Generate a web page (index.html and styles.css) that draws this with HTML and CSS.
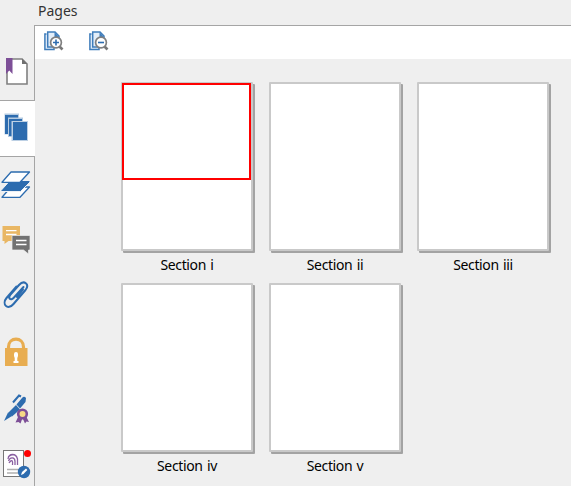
FILE: index.html
```html
<!DOCTYPE html>
<html lang="en">
<head>
<meta charset="utf-8">
<title>Pages</title>
<link rel="stylesheet" href="styles.css">
</head>
<body>
<div class="app">
  <nav class="sidebar">
    <div class="tab">
      <svg viewBox="0 44 34 56"><path d="M7 59H22L27 64V84H7Z" fill="#fff" stroke="#808080" stroke-width="1.6"/><path d="M22 58.5V64H27.5Z" fill="#707070"/><path d="M6 58H12.5V74L9.3 70.5L6 74Z" fill="#7d4f97"/></svg>
    </div>
    <div class="tab tab-active">
      <svg viewBox="0 101 34 55"><path d="M4.5 113.500H19V134.500H4.500Z" fill="#b5cbe1"/><path d="M5 115H18V134H5Z" fill="#2d6caf"/><path d="M8 117.500H23V137H8Z" fill="#b5cbe1"/><path d="M9 119H22V136H9Z" fill="#2d6caf"/><path d="M11.500 121H28V141H11.500Z" fill="#bdd0e4"/><path d="M13 122H27V140H13Z" fill="#2d6caf"/></svg>
    </div>
    <div class="tab">
      <svg viewBox="0 157 34 56" stroke-linejoin="round"><path d="M2 197.300L11 187H29.500L20 197.300Z" fill="#fff" stroke="#2d6caf" stroke-width="1.300"/><path d="M1 190.500L10 180.500H30V182L20.500 191.500H1Z" fill="#2d6caf" stroke="#edf1f5" stroke-width="1"/><path d="M2 182.300L11 172H29.500L20 182.300Z" fill="#fff" stroke="#2d6caf" stroke-width="1.300"/></svg>
    </div>
    <div class="tab">
      <svg viewBox="0 213 34 56"><path d="M2.500 226H20V241H8.500L4.500 244V241H2.500Z" fill="#e9b764"/><path d="M6 230.700H16.500M6 234.500H16.500" stroke="#fff" stroke-width="1.300"/><path d="M12 235.500H30V250H28.500V254L23.500 250H12Z" fill="#727272" stroke="#efefef" stroke-width=".7"/><path d="M16 240.500H26.500M16 244.500H26.500" stroke="#fff" stroke-width="1.300"/></svg>
    </div>
    <div class="tab">
      <svg viewBox="0 269 34 56"><path d="M23.500 287L14 297.500C10.500 301.500 7.500 298 10.500 294.500L19 285C24 279.500 30 284 25.500 290L13.500 304C7.500 311 1.500 304 6.500 298L16.500 286.500M23 289.500L17 297" fill="none" stroke="#2d6caf" stroke-width="2" stroke-linecap="round"/></svg>
    </div>
    <div class="tab">
      <svg viewBox="0 325 34 56"><path d="M8.500 350V347C8.500 336.500 23.500 336.500 23.500 347V350" fill="none" stroke="#e8ad51" stroke-width="3.200"/><rect x="5" y="348" width="22.500" height="18" fill="#e8ad51"/><path d="M14 356V354A2 2 0 0 1 18 354V356L17.300 358V361H18.500V363H13.500V361H14.700V358Z" fill="#fff"/></svg>
    </div>
    <div class="tab">
      <svg viewBox="0 381 34 56"><path d="M4 421L8 412.500L12 416Z" fill="#2d6caf"/><path d="M8 413L16 405L20 409.500L12 416.500Z" fill="#2d6caf"/><path d="M16.500 404.500L22 398Q24 395.500 26 398L25.500 402L20 408.500Z" fill="#2d6caf"/><path d="M13 402.500L19 395.500L21 396.500" fill="none" stroke="#2d6caf" stroke-width="2"/><path d="M18 417L15.500 422.500L18.500 422L20.500 423.500L22.500 418L25 423.500L26.500 421.500L29 422L26 416Z" fill="#7d4f97"/><circle cx="22.500" cy="414" r="5.600" fill="#7d4f97"/><circle cx="22.500" cy="414" r="3" fill="#f7d985"/></svg>
    </div>
    <div class="tab">
      <svg viewBox="0 437 34 56"><rect x="3.500" y="450.500" width="20" height="26" fill="#fff" stroke="#777"/><g fill="none" stroke="#8a60a1" stroke-width="1.300"><path d="M8 459C9 453 16 453 17.500 459V465M8.500 461C10 456.500 15 457 15 461.500V465M9 463C12 458.500 13 461 12.500 465M8 456.500L13 454.500"/></g><path d="M7 469.500H20M7 473H18" stroke="#b0b0b0" stroke-width="1.300"/><circle cx="27.500" cy="453.500" r="3.500" fill="#f00"/><circle cx="24" cy="472" r="6.200" fill="#2d6caf"/><path d="M21 475L22 472L26 468.500L27.300 470L23.500 474Z" fill="#fff"/></svg>
    </div>
  </nav>
  <main class="main">
    <h1 class="title">Pages</h1>
    <section class="panel">
      <div class="toolbar">
        <svg class="tool" viewBox="0 0 20 20"><path d="M2.500 3H.9V18.500H10V16M7 1H3.700V16H15V5L11 1Z" fill="#e3eef9" stroke="#3f7dbb" stroke-width="1.500"/><path d="M10.500 1V6H15" fill="#3f7dbb"/><path d="M15.500 15.500L18.500 18.500" stroke="#777" stroke-width="2.700"/><circle cx="12" cy="11.500" r="5.400" fill="#fff" stroke="#808080" stroke-width="1.700"/><path d="M9 11.500H15M12 8.500V14.500" stroke="#2d6caf" stroke-width="1.600"/></svg>
        <svg class="tool" viewBox="0 0 20 20"><path d="M2.500 3H.9V18.500H10V16M7 1H3.700V16H15V5L11 1Z" fill="#e3eef9" stroke="#3f7dbb" stroke-width="1.500"/><path d="M10.500 1V6H15" fill="#3f7dbb"/><path d="M15.500 15.500L18.500 18.500" stroke="#777" stroke-width="2.700"/><circle cx="12" cy="11.500" r="5.400" fill="#fff" stroke="#808080" stroke-width="1.700"/><path d="M9 11.500H15" stroke="#2d6caf" stroke-width="1.600"/></svg>
      </div>
      <div class="pages">
        <figure class="page"><div class="sheet"><div class="view"></div></div><figcaption>Section i</figcaption></figure>
        <figure class="page"><div class="sheet"></div><figcaption>Section ii</figcaption></figure>
        <figure class="page"><div class="sheet"></div><figcaption>Section iii</figcaption></figure>
        <figure class="page"><div class="sheet"></div><figcaption>Section iv</figcaption></figure>
        <figure class="page"><div class="sheet"></div><figcaption>Section v</figcaption></figure>
      </div>
    </section>
  </main>
</div>
</body>
</html>
```
FILE: styles.css
```css
* { box-sizing: border-box; }
body {
  margin: 0;
  background: #efefef;
  font-family: "Noto Sans", sans-serif;
  overflow: hidden;
}
.app { display: flex; height: 486px; overflow: hidden; }
.sidebar {
  flex: 0 0 35px;
  padding-top: 44px;
}
.tab {
  height: 56px;
  border-right: 1px solid #a5a5a5;
}
.tab:first-child { margin-top: -18px; padding-top: 18px; height: 74px; }
.tab svg { display: block; width: 34px; height: 56px; }
.tab-active {
  height: 57px;
  background: #fff;
  border: solid #a5a5a5;
  border-width: 1px 0;
}
.tab-active svg { height: 55px; }
.main { flex: 1; margin-left: -1px; }
.title {
  margin: 0;
  height: 25px;
  padding-left: 4px;
  font-size: 14px;
  font-weight: 400;
  line-height: 22px;
  color: #333;
}
.panel { border-top: 1px solid #a5a5a5; }
.toolbar {
  display: flex;
  gap: 25px;
  height: 33px;
  margin-left: 1px;
  padding: 5px 0 0 9px;
  background: #fff;
}
.tool { width: 20px; height: 20px; }
.pages {
  display: grid;
  grid-template-columns: repeat(3, 132px);
  grid-auto-rows: 185px;
  gap: 16px;
  padding: 23px 0 0 87px;
}
.page { margin: 0; }
.sheet {
  height: 169px;
  border: 2px solid #c9c9c9;
  border-radius: 1px;
  background: #fff;
  box-shadow: 2px 2px 0 #a3a3a3;
}
.view {
  width: 129px;
  height: 97px;
  margin: -1px;
  border: 2px solid #f00;
}
figcaption {
  padding-top: 4px;
  font-size: 14px;
  line-height: 20px;
  letter-spacing: -0.35px;
  word-spacing: 1px;
  text-align: center;
  white-space: nowrap;
  color: #000;
}
```
